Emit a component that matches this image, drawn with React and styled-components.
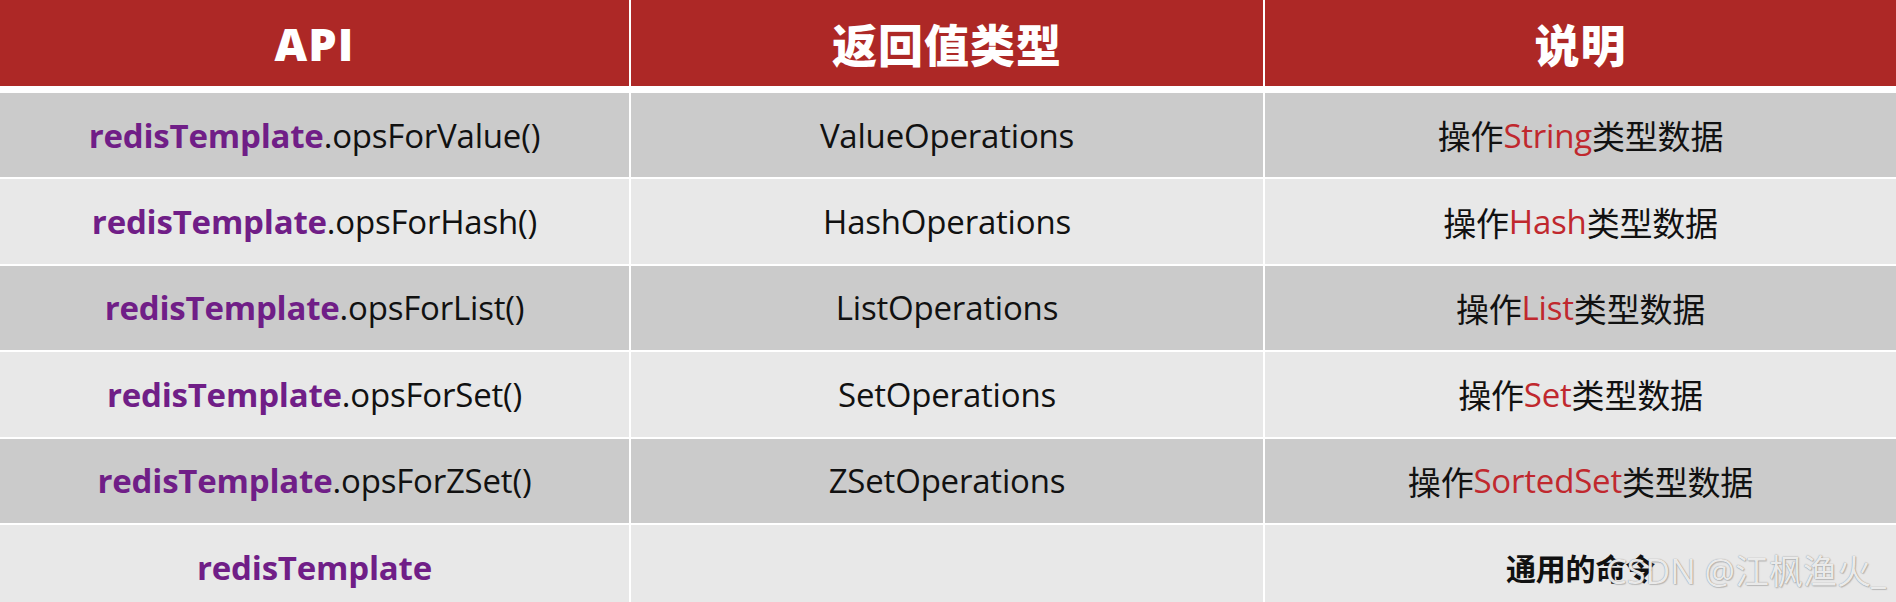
import React from "react";
import styled, { createGlobalStyle } from "styled-components";

const Global = createGlobalStyle`
  html, body { margin: 0; padding: 0; background: #ffffff; }
  body { font-family: "Open Sans", "Noto Sans CJK SC", sans-serif; }
`;

const Page = styled.div`
  position: relative;
  width: 1896px;
  height: 602px;
  overflow: hidden;
  background: #ffffff;
`;

const Grid = styled.div`
  display: grid;
  grid-template-columns: 629px 632px 1fr;
  column-gap: 2px;
  background: #ffffff;
`;

const HeaderRow = styled(Grid)`
  height: 86px;
  margin-bottom: 7px;
`;

const HeadCell = styled.div`
  background: #ad2826;
  color: #ffffff;
  display: flex;
  align-items: center;
  justify-content: center;
  font-family: "Open Sans", "Noto Sans CJK SC", sans-serif;
  font-weight: 800;
  font-size: 45px;
  letter-spacing: 1px;
`;

const Body = styled.div`
  display: flex;
  flex-direction: column;
  gap: 2px;
`;

const Row = styled(Grid)`
  height: 84.4px;
  flex: none;
`;

const Cell = styled.div`
  background: ${(p) => (p.$dark ? "#cbcbcb" : "#e8e8e8")};
  display: flex;
  align-items: center;
  justify-content: center;
  font-family: "Open Sans", "Noto Sans CJK SC", sans-serif;
  font-size: ${(p) => (p.$small ? "30px" : "33px")};
  font-weight: ${(p) => (p.$bold ? 700 : 400)};
  color: #111111;
  white-space: nowrap;
  letter-spacing: -0.2px;
`;

const Obj = styled.span`
  color: #701e87;
  font-weight: 700;
`;

const Hl = styled.span`
  color: #c0282e;
`;

const Watermark = styled.div`
  position: absolute;
  right: 10px;
  bottom: 8px;
  font-family: "Open Sans", "Noto Sans CJK SC", sans-serif;
  font-size: 34px;
  color: rgba(250, 250, 250, 0.88);
  text-shadow: 0 0 1px rgba(90, 90, 90, 0.75), 1px 1px 1px rgba(120, 120, 120, 0.35);
  white-space: nowrap;
  pointer-events: none;
`;

const rows = [
  { method: "opsForValue()", ret: "ValueOperations", type: "String" },
  { method: "opsForHash()", ret: "HashOperations", type: "Hash" },
  { method: "opsForList()", ret: "ListOperations", type: "List" },
  { method: "opsForSet()", ret: "SetOperations", type: "Set" },
  { method: "opsForZSet()", ret: "ZSetOperations", type: "SortedSet" },
];

export default function App() {
  return (
    <>
      <Global />
      <Page>
        <HeaderRow>
          <HeadCell>API</HeadCell>
          <HeadCell>返回值类型</HeadCell>
          <HeadCell>说明</HeadCell>
        </HeaderRow>
        <Body>
          {rows.map((r, i) => {
            const dark = i % 2 === 0;
            return (
              <Row key={r.method}>
                <Cell $dark={dark}>
                  <Obj>redisTemplate</Obj>.{r.method}
                </Cell>
                <Cell $dark={dark}>{r.ret}</Cell>
                <Cell $dark={dark}>
                  操作<Hl>{r.type}</Hl>类型数据
                </Cell>
              </Row>
            );
          })}
          <Row>
            <Cell>
              <Obj>redisTemplate</Obj>
            </Cell>
            <Cell />
            <Cell $bold $small>
              通用的命令
            </Cell>
          </Row>
        </Body>
        <Watermark>CSDN @江枫渔火_</Watermark>
      </Page>
    </>
  );
}
